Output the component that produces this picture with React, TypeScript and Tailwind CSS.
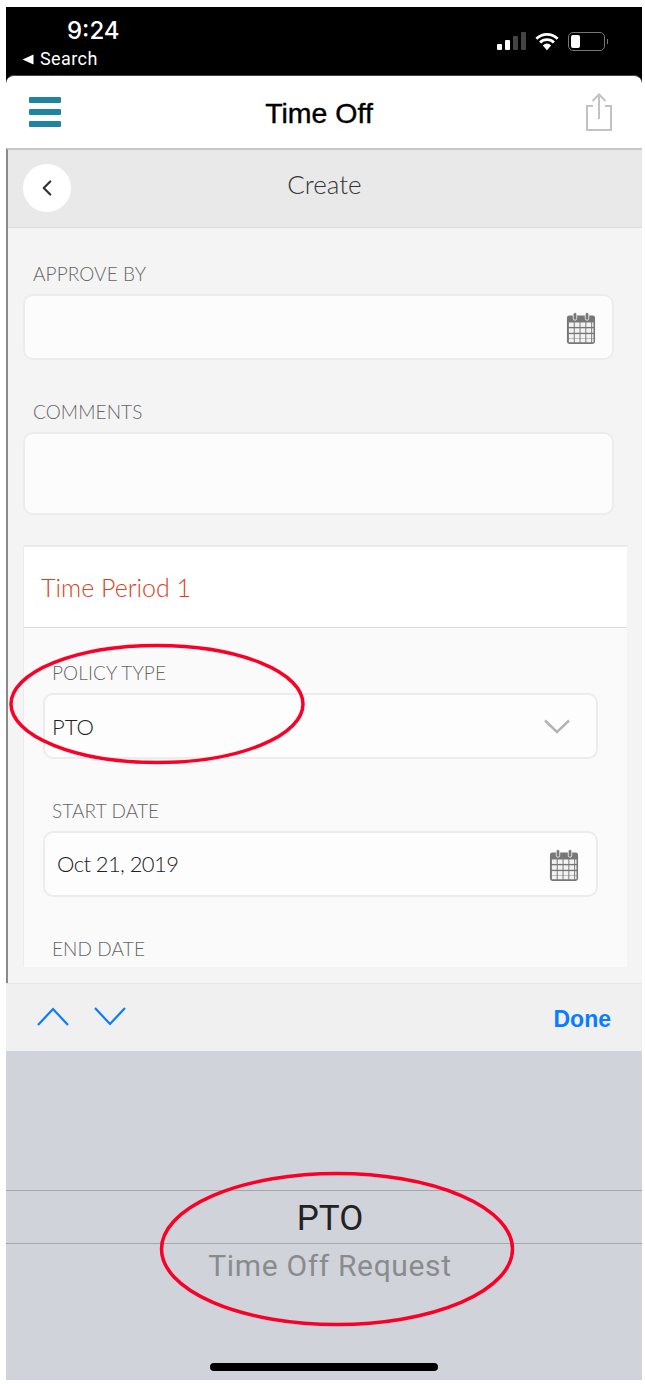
import React from 'react';
import { ChevronLeft } from 'lucide-react';

const latoFont = "font-['Lato','Open_Sans',sans-serif]";

const CalendarIcon: React.FC = () => (
    <svg width="30" height="32" viewBox="0 0 30 33" className="block mt-[1px]">
        <path d="M3 3.5h5.5V6h1.5V3.5h10V6h1.5V3.5H27a2.5 2.5 0 0 1 2.5 2.5v24.5A2.5 2.5 0 0 1 27 33H3a2.5 2.5 0 0 1-2.5-2.5V6A2.5 2.5 0 0 1 3 3.5z" fill="#777" />
        <rect x="7" y="0.5" width="3.6" height="8" rx="1.8" fill="#777" stroke="#fbfbfb" strokeWidth="0.8" />
        <rect x="19.4" y="0.5" width="3.6" height="8" rx="1.8" fill="#777" stroke="#fbfbfb" strokeWidth="0.8" />
        {[11, 17, 23, 28].map((y) => (
            <g key={y}>
                {[2.5, 8.5, 14.5, 20.5].map((x) => (
                    <rect key={x} x={x} y={y - 0.2} width="5" height={y === 28 ? 3.4 : 4.6} fill="#f2f2f2" />
                ))}
            </g>
        ))}
        {[11, 17, 23, 28].map((y) => (
            <rect key={y} x="26.5" y={y - 0.2} width="1.4" height={y === 28 ? 3.4 : 4.6} fill="#f2f2f2" />
        ))}
    </svg>
);

const Label: React.FC<{ text: string }> = ({ text }) => (
    <div className={`${latoFont} text-[19px] leading-[22px] font-light text-[#666] tracking-[0.1px]`}>{text}</div>
);

const App: React.FC = () => {
    return (
        <div className="relative w-[645px] h-[1384px] bg-white pt-[7px] pl-[6px] pr-[3px] pb-[4px] flex flex-col overflow-hidden">
            <div className="bg-black shrink-0">
                {/* status bar */}
                <div className="h-[68px] text-white flex justify-between">
                    <div className="pl-[16px] pt-[10px] font-['Inter',sans-serif]">
                        <div className="text-[24px] leading-[28px] font-medium pl-[45px]">9:24</div>
                        <div className="flex items-center gap-[6px] mt-[4px] font-['Roboto',sans-serif] text-[18px] leading-[20px] tracking-[0.4px]">
                            <svg width="12" height="11" viewBox="0 0 12 11"><path d="M0.5 5.5L11.5 0.5V10.5Z" fill="#fff" /></svg>
                            Search
                        </div>
                    </div>
                    <div className="flex items-center gap-[9px] pr-[34px] pb-[17px] self-end h-[50px]">
                        <svg width="29" height="19" viewBox="0 0 29 19">
                            <rect x="0" y="12" width="5" height="6" rx="1" fill="#fff" />
                            <rect x="8" y="8" width="5" height="10" rx="1" fill="#fff" />
                            <rect x="16" y="4" width="5" height="14" rx="1" fill="#444" />
                            <rect x="24" y="0" width="5" height="18" rx="1" fill="#444" />
                        </svg>
                        <svg width="24" height="19" viewBox="0 0 26 20">
                            <path d="M1.5 7a16.5 16.5 0 0 1 23 0M5.5 11a10.5 10.5 0 0 1 15 0" fill="none" stroke="#fff" strokeWidth="3" />
                            <path d="M8.5 14.2a6.2 6.2 0 0 1 9 0L13 19.5z" fill="#fff" />
                        </svg>
                        <div className="flex items-center gap-[2px]">
                            <div className="w-[37px] h-[19px] rounded-[5px] border border-[#777] p-[2px]">
                                <div className="w-[9px] h-full rounded-[2px] bg-white" />
                            </div>
                            <div className="w-[1px] h-[5px] bg-[#777]" />
                        </div>
                    </div>
                </div>

                {/* app header */}
                <div className="h-[73px] bg-white rounded-t-[8px] flex items-center justify-between pl-[23px] pr-[30px] border-t border-[#444]">
                    <div className="w-[32px] flex flex-col gap-[6px] -mt-[1px]">
                        <div className="h-[6px] rounded-[1px] bg-[#1f84a1]" />
                        <div className="h-[6px] rounded-[1px] bg-[#1f84a1]" />
                        <div className="h-[6px] rounded-[1px] bg-[#1f84a1]" />
                    </div>
                    <div className="font-['Liberation_Sans',sans-serif] text-[28.5px] leading-[34px] text-black font-normal [-webkit-text-stroke:0.4px_#000] -ml-[9px] mt-[1px]">Time Off</div>
                    <svg width="26" height="38" viewBox="0 0 26 38" fill="none" stroke="#c2c2c2" strokeWidth="2">
                        <path d="M7 13H1v24h24V13h-6" />
                        <path d="M13 26V2M6.5 8L13 1.5 19.5 8" />
                    </svg>
                </div>
            </div>

            {/* scrolling page */}
            <div className="flex-1 min-h-0 border-l-2 border-[#8a8a8a] border-t-2 border-t-[#c8c8c8] bg-[#f4f4f4] flex flex-col overflow-hidden">
                <div className="h-[78px] bg-[#e9e9e9] border-b border-[#dcdcdc] flex items-center pl-[15px] shrink-0">
                    <div className="w-[48px] h-[48px] rounded-full bg-white flex items-center justify-center -mt-[2px] shrink-0">
                        <ChevronLeft size={26} strokeWidth={2} color="#333" />
                    </div>
                    <div className={`${latoFont} flex-1 text-center text-[26px] leading-[30px] font-light text-[#333] pr-[64px] -mt-[9px]`}>Create</div>
                </div>

                <div className="pt-[35px] pl-[15px] pr-[28px] flex-1 min-h-0 overflow-hidden">
                    <div className="pl-[10px]"><Label text="APPROVE BY" /></div>
                    <div className="mt-[9px] h-[66px] rounded-[10px] bg-[#fcfcfc] border-2 border-[#ececec] flex items-center justify-end pr-[16px]">
                        <CalendarIcon />
                    </div>
                    <div className="pl-[10px] mt-[41px]"><Label text="COMMENTS" /></div>
                    <div className="mt-[9px] h-[83px] rounded-[10px] bg-[#fcfcfc] border-2 border-[#ececec]" />

                    {/* time period section */}
                    <div className="mt-[30px] -mr-[13px] border-t-2 border-l border-[#ebebeb] bg-[#fafafa] h-[422px] overflow-hidden">
                        <div className="h-[81px] bg-white border-b border-[#d9d9d9] flex items-center pl-[17px]">
                            <div className={`${latoFont} text-[25px] leading-[30px] font-light text-[#d9431e]`}>Time Period 1</div>
                        </div>
                        <div className="pl-[19px] pr-[29px] pt-[34px]">
                            <div className="pl-[9px]"><Label text="POLICY TYPE" /></div>
                            <div className="mt-[9px] h-[66px] rounded-[10px] bg-[#fdfdfd] border-2 border-[#ececec] flex items-center justify-between pl-[7px] pr-[26px]">
                                <div className={`${latoFont} text-[22px] leading-[26px] font-light text-[#222] mt-[2px]`}>PTO</div>
                                <svg width="26" height="15" viewBox="0 0 26 15" fill="none" stroke="#b5b5b5" strokeWidth="2.5">
                                    <path d="M1 1.5L13 13 25 1.5" />
                                </svg>
                            </div>
                            <div className="pl-[9px] mt-[41px]"><Label text="START DATE" /></div>
                            <div className="mt-[9px] h-[66px] rounded-[10px] bg-[#fdfdfd] border-2 border-[#ececec] flex items-center justify-between pl-[12px] pr-[17px]">
                                <div className={`${latoFont} text-[22px] leading-[26px] font-light text-[#222] tracking-[-0.6px] -mt-[1px]`}>Oct 21, 2019</div>
                                <CalendarIcon />
                            </div>
                            <div className="pl-[9px] mt-[41px]"><Label text="END DATE" /></div>
                        </div>
                    </div>
                </div>
            </div>

            {/* keyboard accessory */}
            <div className="h-[68px] bg-[#f0f0f1] border-t border-[#e6e6e6] flex items-center justify-between pl-[31px] pr-[31px] shrink-0">
                <div className="flex items-center gap-[25px] -mt-[2px]">
                    <svg width="32" height="19" viewBox="0 0 32 19" fill="none" stroke="#0a7cff" strokeWidth="2.2">
                        <path d="M1 18L16 2 31 18" />
                    </svg>
                    <svg width="32" height="19" viewBox="0 0 32 19" fill="none" stroke="#0a7cff" strokeWidth="2.2">
                        <path d="M1 1L16 17 31 1" />
                    </svg>
                </div>
                <div className="font-['Liberation_Sans',sans-serif] font-bold text-[23px] leading-[28px] text-[#0a7cff] mt-[2px]">Done</div>
            </div>

            {/* picker */}
            <div className="h-[329px] shrink-0 bg-[#d1d3da] flex flex-col items-center pt-[139px] font-['Roboto',sans-serif]">
                <div className="w-full h-[54px] border-y border-[#a6a7ab] flex items-center justify-center pl-[12px] pt-[3px] text-[35px] leading-[40px] text-[#222]">PTO</div>
                <div className="text-[30px] leading-[36px] text-[#8a8b8e] mt-[4px] tracking-[0.65px] pl-[12px]">Time Off Request</div>
                <div className="w-[228px] h-[8px] rounded-full bg-black mt-[79px]" />
            </div>

            {/* red annotation ellipses */}
            <svg className="absolute left-0 top-0 pointer-events-none" width="645" height="1384" fill="none" stroke="#fb0026" strokeWidth="3.5">
                <ellipse cx="157" cy="704" rx="146" ry="58.5" />
                <ellipse cx="337" cy="1249" rx="175.5" ry="75.5" />
            </svg>
        </div>
    );
};

export default App;
